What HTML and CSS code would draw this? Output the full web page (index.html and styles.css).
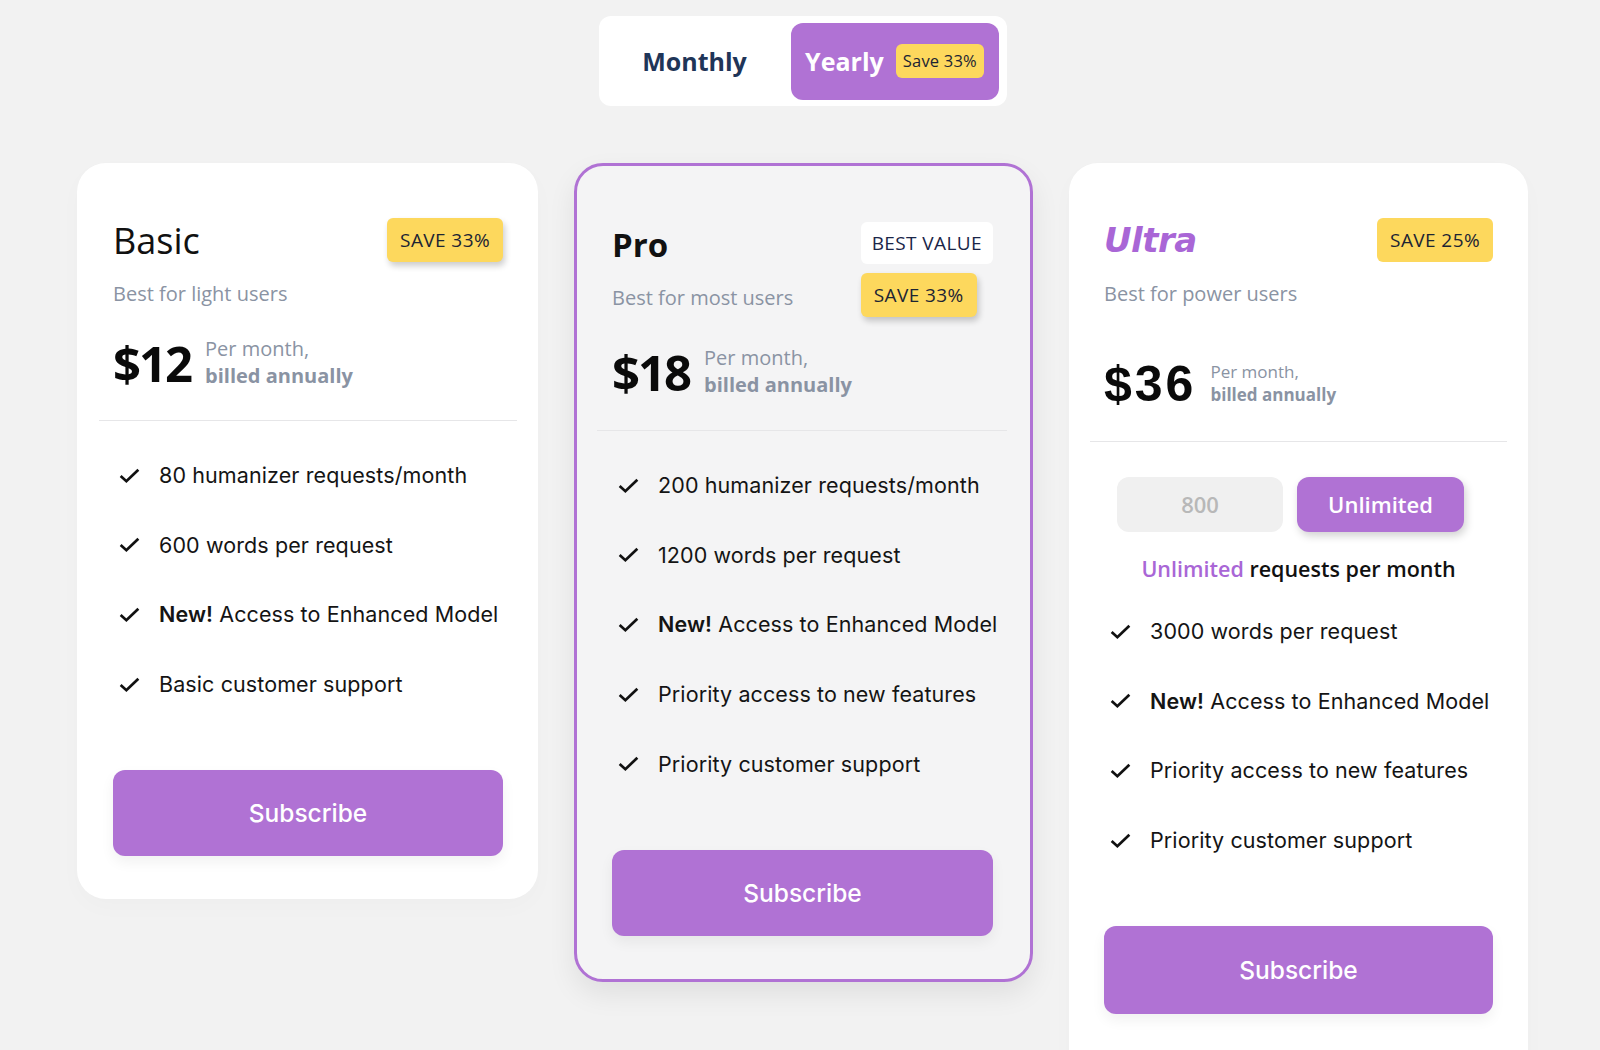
FILE: index.html
```html
<!DOCTYPE html>
<html lang="en">
<head>
  <meta charset="UTF-8">
  <title>Pricing</title>
  <link rel="stylesheet" href="styles.css">
</head>
<body>

  <div class="page">
    <div class="toggle">
      <button class="toggle-btn">Monthly</button>
      <button class="toggle-btn active">Yearly <span class="save-pill">Save 33%</span></button>
    </div>

    <div class="plans">
      <!-- Basic -->
      <div class="card">
        <div class="card-head">
          <div>
            <h2 class="plan-name">Basic</h2>
            <p class="plan-sub">Best for light users</p>
          </div>
          <div class="badges">
            <span class="badge save shadow">SAVE 33%</span>
          </div>
        </div>
        <div class="price">
          <span class="amount">$12</span>
          <span class="per">Per month,<br><b>billed annually</b></span>
        </div>
        <hr class="divider">
        <ul class="features">
          <li><svg class="check" viewBox="0 0 24 24"><polyline points="3.5,12.5 9,17.5 20.5,6.5"/></svg>80 humanizer requests/month</li>
          <li><svg class="check" viewBox="0 0 24 24"><polyline points="3.5,12.5 9,17.5 20.5,6.5"/></svg>600 words per request</li>
          <li><svg class="check" viewBox="0 0 24 24"><polyline points="3.5,12.5 9,17.5 20.5,6.5"/></svg><span><b>New!</b> Access to Enhanced Model</span></li>
          <li><svg class="check" viewBox="0 0 24 24"><polyline points="3.5,12.5 9,17.5 20.5,6.5"/></svg>Basic customer support</li>
        </ul>
        <button class="subscribe">Subscribe</button>
      </div>

      <!-- Pro -->
      <div class="card pro">
        <div class="card-head">
          <div>
            <h2 class="plan-name bold">Pro</h2>
            <p class="plan-sub">Best for most users</p>
          </div>
          <div class="badges">
            <span class="badge best">BEST VALUE</span>
            <span class="badge save shadow">SAVE 33%</span>
          </div>
        </div>
        <div class="price">
          <span class="amount">$18</span>
          <span class="per">Per month,<br><b>billed annually</b></span>
        </div>
        <hr class="divider">
        <ul class="features">
          <li><svg class="check" viewBox="0 0 24 24"><polyline points="3.5,12.5 9,17.5 20.5,6.5"/></svg>200 humanizer requests/month</li>
          <li><svg class="check" viewBox="0 0 24 24"><polyline points="3.5,12.5 9,17.5 20.5,6.5"/></svg>1200 words per request</li>
          <li><svg class="check" viewBox="0 0 24 24"><polyline points="3.5,12.5 9,17.5 20.5,6.5"/></svg><span><b>New!</b> Access to Enhanced Model</span></li>
          <li><svg class="check" viewBox="0 0 24 24"><polyline points="3.5,12.5 9,17.5 20.5,6.5"/></svg>Priority access to new features</li>
          <li><svg class="check" viewBox="0 0 24 24"><polyline points="3.5,12.5 9,17.5 20.5,6.5"/></svg>Priority customer support</li>
        </ul>
        <button class="subscribe">Subscribe</button>
      </div>

      <!-- Ultra -->
      <div class="card ultra">
        <div class="card-head">
          <div>
            <h2 class="plan-name ultra-name">Ultra</h2>
            <p class="plan-sub">Best for power users</p>
          </div>
          <div class="badges">
            <span class="badge save">SAVE 25%</span>
          </div>
        </div>
        <div class="price">
          <span class="amount arial">$36</span>
          <span class="per small">Per month,<br><b>billed annually</b></span>
        </div>
        <hr class="divider">
        <div class="tier-switch">
          <button class="tier">800</button>
          <button class="tier on">Unlimited</button>
        </div>
        <p class="tier-note"><span class="purple">Unlimited</span> requests per month</p>
        <ul class="features tight">
          <li><svg class="check" viewBox="0 0 24 24"><polyline points="3.5,12.5 9,17.5 20.5,6.5"/></svg>3000 words per request</li>
          <li><svg class="check" viewBox="0 0 24 24"><polyline points="3.5,12.5 9,17.5 20.5,6.5"/></svg><span><b>New!</b> Access to Enhanced Model</span></li>
          <li><svg class="check" viewBox="0 0 24 24"><polyline points="3.5,12.5 9,17.5 20.5,6.5"/></svg>Priority access to new features</li>
          <li><svg class="check" viewBox="0 0 24 24"><polyline points="3.5,12.5 9,17.5 20.5,6.5"/></svg>Priority customer support</li>
        </ul>
        <button class="subscribe">Subscribe</button>
      </div>
    </div>
  </div>

</body>
</html>
```

FILE: styles.css
```css
* {
  box-sizing: border-box;
}

body {
  margin: 0;
  background: #f2f2f2;
  font-family: 'Inter', sans-serif;
  overflow: hidden;
  height: 1050px;
}

.page {
  width: 1451px;
  margin-left: 77px;
  padding-top: 16px;
}

.toggle {
  width: 408px;
  height: 90px;
  margin: 0 auto 57px;
  background: #fff;
  border-radius: 12px;
  padding: 7px 8px 6px;
  display: flex;
  justify-content: space-between;
}

.toggle-btn {
  border: none;
  background: none;
  font-family: 'Open Sans', sans-serif;
  font-weight: 700;
  font-size: 25px;
  color: #1f3558;
  width: 176px;
  border-radius: 12px;
  padding: 0 0 2px;
}

.toggle-btn.active {
  width: 208px;
  background: #b072d4;
  color: #fff;
  display: flex;
  align-items: center;
  justify-content: center;
  gap: 12px;
}

.save-pill {
  height: 34px;
  line-height: 34px;
  background: #fdd85d;
  color: #1c2433;
  font-size: 16.5px;
  font-weight: 500;
  padding: 0 7px;
  border-radius: 6px;
  letter-spacing: 0.2px;
}

.plans {
  display: flex;
  align-items: flex-start;
  gap: 36px;
}

.card {
  width: 461px;
  background: #fff;
  border-radius: 29px;
  padding: 55px 35px 43px 36px;
  box-shadow: 0 8px 24px rgba(0, 0, 0, 0.02);
}

.card.pro {
  width: 459px;
  background: #f4f4f5;
  border: 3px solid #b072d4;
  padding: 56px 37px 43px 35px;
  box-shadow: 0 12px 28px rgba(0, 0, 0, 0.08);
}

.card.ultra {
  width: 459px;
  padding: 55px 35px 80px 35px;
}

.card-head {
  display: flex;
  justify-content: space-between;
  align-items: flex-start;
}

.plan-name {
  margin: 0;
  height: 45px;
  line-height: 45px;
  font-family: 'Open Sans', sans-serif;
  font-size: 36px;
  font-weight: 400;
  color: #111;
}

.plan-name.bold {
  font-weight: 700;
  font-size: 33px;
}

.plan-name.ultra-name {
  font-family: 'DejaVu Sans', sans-serif;
  font-weight: 700;
  font-style: italic;
  font-size: 34px;
  color: #a966d6;
  letter-spacing: -0.5px;
}

.plan-sub {
  margin: 17px 0 0;
  line-height: 28px;
  font-family: 'Open Sans', sans-serif;
  font-size: 20px;
  color: #8a93a3;
}

.badges {
  display: flex;
  flex-direction: column;
  align-items: flex-start;
  gap: 9px;
}

.badge {
  display: inline-block;
  height: 44px;
  line-height: 44px;
  padding: 0 13px;
  border-radius: 6px;
  font-family: 'Open Sans', sans-serif;
  font-size: 19px;
  font-weight: 500;
  color: #1c2433;
  letter-spacing: 0.4px;
}

.badge.save {
  background: #fdd85d;
}

.badge.best {
  background: #fff;
  height: 42px;
  line-height: 42px;
  padding: 0 11px;
  color: #1a2548;
}

.badge.shadow {
  box-shadow: 2px 4px 6px rgba(0, 0, 0, 0.2);
}

.price {
  margin-top: 24px;
  display: flex;
  align-items: center;
  gap: 14px;
  height: 62px;
}

.ultra .price {
  margin-top: 45px;
}

.amount {
  font-family: 'Open Sans', sans-serif;
  font-weight: 700;
  font-size: 49px;
  line-height: 62px;
  color: #0a0a0a;
  letter-spacing: -2px;
}

.amount.arial {
  font-family: 'Liberation Sans', sans-serif;
  font-size: 50px;
  letter-spacing: 3px;
}

.per {
  font-family: 'Open Sans', sans-serif;
  font-size: 20px;
  line-height: 27.5px;
  color: #8a93a3;
  position: relative;
  top: -1px;
}

.per b {
  font-weight: 700;
}

.per.small {
  font-size: 17px;
  line-height: 23.5px;
}

.divider {
  border: none;
  border-top: 1px solid #e6e6e8;
  margin: 26px -14px 0 -14px;
}

.pro .divider {
  margin-top: 27px;
  margin-left: -15px;
}

.features {
  list-style: none;
  margin: 0;
  padding: 39px 0 0;
  display: flex;
  flex-direction: column;
  gap: 39.7px;
}

.features.tight {
  padding-top: 32px;
}

.features li {
  display: flex;
  align-items: center;
  height: 30px;
  white-space: nowrap;
  font-size: 21.5px;
  color: #141414;
  letter-spacing: 0.1px;
}

.features b {
  font-weight: 600;
}

.check {
  width: 25px;
  height: 25px;
  margin: 0 17px 0 4px;
  flex-shrink: 0;
  fill: none;
  stroke: #111;
  stroke-width: 2.6;
}

.subscribe {
  display: block;
  width: 100%;
  height: 86px;
  margin-top: 71px;
  border: none;
  border-radius: 12px;
  background: #b072d4;
  color: #fff;
  font-family: 'Inter', sans-serif;
  font-size: 24.5px;
  font-weight: 500;
  box-shadow: 0 6px 14px rgba(0, 0, 0, 0.06);
}

.ultra .subscribe {
  height: 88px;
  margin-top: 71px;
}

.tier-switch {
  display: flex;
  gap: 14px;
  margin: 35px 0 0 13px;
}

.tier {
  width: 166px;
  height: 55px;
  border: none;
  border-radius: 12px;
  background: #f0f0f0;
  color: #b8b8b8;
  font-family: 'Open Sans', sans-serif;
  font-size: 22px;
  font-weight: 600;
  padding-bottom: 2px;
}

.tier.on {
  width: 167px;
  background: #b072d4;
  color: #fff;
  box-shadow: 2px 4px 8px rgba(0, 0, 0, 0.18);
}

.tier-note {
  margin: 22px 0 0;
  text-align: center;
  font-family: 'Open Sans', sans-serif;
  font-size: 21.5px;
  font-weight: 600;
  line-height: 30px;
  color: #111;
}

.purple {
  color: #a966d6;
}
```
